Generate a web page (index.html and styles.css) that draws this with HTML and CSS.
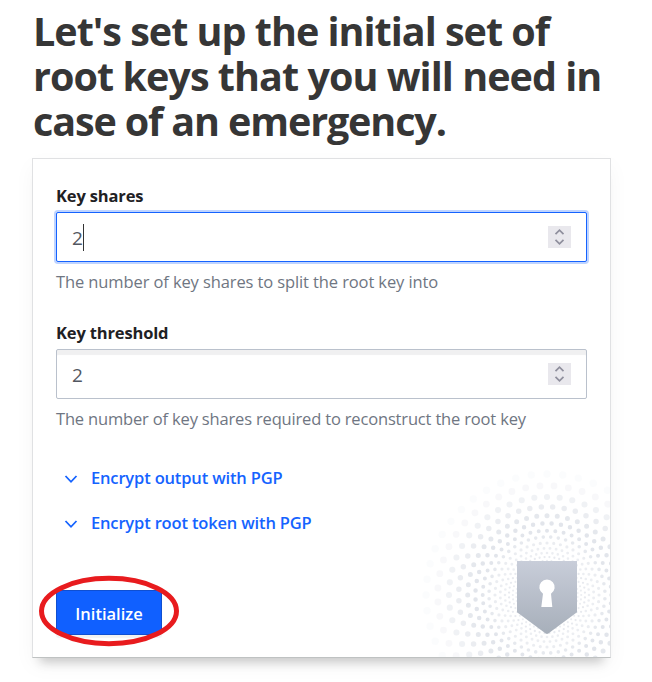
FILE: index.html
```
<!DOCTYPE html>
<html lang="en">
<head>
<meta charset="utf-8">
<title>Vault</title>
<link rel="stylesheet" href="styles.css">
</head>
<body>
<main class="page">
  <h1 class="title"><span class="l1">Let's set up the initial set of</span><br><span class="l2">root keys that you will need in</span><br><span class="l3">case of an emergency.</span></h1>
  <form class="card">
    <svg class="art" width="192" height="192" viewBox="0 0 192 192" aria-hidden="true">
      <defs>
        <linearGradient id="shield" x1="0" y1="0" x2="0" y2="1"><stop offset="0" stop-color="#c8cdd9"/><stop offset="1" stop-color="#a7afba"/></linearGradient>
      </defs>
      <g class="rings">
        <circle cx="129" cy="130" r="121" pathLength="48" stroke-width="7.4" opacity=".12"/>
        <circle cx="129" cy="130" r="109.3" pathLength="48" stroke-width="6.8" stroke-dashoffset=".5" opacity=".25"/>
        <circle cx="129" cy="130" r="98" pathLength="48" stroke-width="6.1" opacity=".5"/>
        <circle cx="129" cy="130" r="88.3" pathLength="48" stroke-width="5.5" stroke-dashoffset=".5" opacity=".7"/>
        <circle cx="129" cy="130" r="79.3" pathLength="48" stroke-width="5" opacity=".9"/>
        <circle cx="129" cy="130" r="71.6" pathLength="48" stroke-width="4.5" stroke-dashoffset=".5"/>
        <circle cx="129" cy="130" r="64.3" pathLength="48" stroke-width="4"/>
        <circle cx="129" cy="130" r="58" pathLength="48" stroke-width="3.6" stroke-dashoffset=".5" opacity=".85"/>
        <circle cx="129" cy="130" r="52" pathLength="48" stroke-width="3.2" opacity=".7"/>
        <circle cx="129" cy="130" r="46.7" pathLength="48" stroke-width="2.9" stroke-dashoffset=".5" opacity=".65"/>
        <circle cx="129" cy="130" r="42" pathLength="48" stroke-width="2.6" opacity=".65"/>
        <circle cx="129" cy="130" r="38" pathLength="48" stroke-width="2.3" stroke-dashoffset=".5" opacity=".8"/>
        <circle cx="129" cy="130" r="34.2" pathLength="48" stroke-width="2.1" opacity=".7"/>
        <circle cx="129" cy="130" r="30.8" pathLength="48" stroke-width="1.9" stroke-dashoffset=".5" opacity=".5"/>
      </g>
      <path fill="url(#shield)" d="M99 96h60v51.300l-28.700 21.300q-1.300.9-2.600 0L99 147.300z"/>
      <path fill="#fff" d="M125 128.700a7.700 7.700 0 1 1 8 0l1.300 13.300h-11z"/>
    </svg>
    <div class="field">
      <label class="label" for="shares">Key shares</label>
      <div class="control focused"><span class="value" id="shares">2</span><i class="caret"></i>
        <span class="stepper"><svg width="23" height="22" viewBox="0 0 23 22"><path d="M7.500 8.200l4-4 4 4M7.500 13.800l4 4 4-4"/></svg></span></div>
      <p class="help">The number of key shares to split the root key into</p>
    </div>
    <div class="field">
      <label class="label" for="threshold">Key threshold</label>
      <div class="control"><span class="value" id="threshold">2</span>
        <span class="stepper"><svg width="23" height="22" viewBox="0 0 23 22"><path d="M7.500 8.200l4-4 4 4M7.500 13.800l4 4 4-4"/></svg></span></div>
      <p class="help help-threshold">The number of key shares required to reconstruct the root key</p>
    </div>
    <div class="toggles">
      <div class="toggle"><svg width="14" height="10" viewBox="0 0 14 10"><path d="M1.500 2L7 7.800 12.500 2"/></svg><span>Encrypt output with PGP</span></div>
      <div class="toggle"><svg width="14" height="10" viewBox="0 0 14 10"><path d="M1.500 2L7 7.800 12.500 2"/></svg><span>Encrypt root token with PGP</span></div>
    </div>
    <div class="action">
      <button class="button" type="button"><span>Initialize</span></button>
      <svg class="marker" width="142" height="72" viewBox="0 0 142 72" aria-hidden="true"><ellipse cx="71" cy="36" rx="67.500" ry="32.700"/></svg>
    </div>
  </form>
</main>
</body>
</html>
```
FILE: styles.css
```
* { box-sizing: border-box; }
body { margin: 0; background: #fff; font-family: "Open Sans", "Noto Sans", sans-serif; overflow: hidden; }
.page { padding: 9px 0 0 32px; height: 682px; }
.title { margin: 0 0 14px 1px; color: #363636; font-size: 39.5px; line-height: 45px; font-weight: 700; white-space: nowrap; }
.l1 { letter-spacing: -1px; }
.l2 { letter-spacing: -.96px; }
.l3 { letter-spacing: -1.13px; }
.card { position: relative; width: 579px; height: 500px; padding: 23px 23px 0; border: 1px solid #e0e1e3; border-bottom-color: #bfc2c2; background: #fff; box-shadow: 0 12px 10px -8px rgba(0,0,0,.2), 0 8px 20px rgba(0,0,0,.04); }
.field { height: 137px; }
.label { display: block; height: 30px; line-height: 27px; font-size: 16.5px; font-weight: 700; color: #1f2124; white-space: nowrap; letter-spacing: -.15px; }
.control { display: flex; align-items: center; width: 531px; height: 50px; padding: 0 15px; border: 1px solid #bac1cc; border-radius: 2px; background: #fff; box-shadow: inset 0 6px 1px -1px #f0f0f1; }
.focused { border-color: #1563ff; box-shadow: 0 0 0 2px #bfd4ff; }
.value { font-size: 19px; line-height: 28px; padding-top: 2px; color: #525761; }
.caret { width: 1px; height: 27px; background: #333; }
.stepper { width: 23px; height: 22px; margin-left: auto; background: #e9e8ed; }
.stepper svg { display: block; fill: none; stroke: #8f8f9d; stroke-width: 1.7; }
.help { margin: 7px 0 0; line-height: 26px; font-size: 16.5px; color: #6f7682; white-space: nowrap; width: max-content; letter-spacing: -.11px; }
.help-threshold { letter-spacing: -.17px; }
.toggles { padding: 0 0 0 8px; }
.toggle { display: flex; align-items: center; gap: 13px; height: 45px; padding-bottom: 2px; font-size: 16.5px; font-weight: 600; color: #1563ff; white-space: nowrap; letter-spacing: -.16px; }
.toggle svg { position: relative; top: 1px; fill: none; stroke: #1563ff; stroke-width: 1.8; }
.action { position: relative; width: 106px; margin-top: 44px; }
.button { display: block; width: 106px; height: 45px; padding: 1px 0 0; border: 1px solid #0f4fd1; border-radius: 3px; background: #1060ff; color: #fff; font: 600 16.5px "Open Sans", sans-serif; letter-spacing: 0; box-shadow: 0 3px 1px rgba(0,0,0,.05); }
.marker { position: absolute; left: -18px; top: -15px; fill: none; stroke: #e81b1e; stroke-width: 5; }
.art { position: absolute; right: 0; bottom: 0; width: 192px; height: 192px; }
.rings { fill: none; stroke: #e2e5eb; stroke-linecap: round; stroke-dasharray: 0 1; }
```
